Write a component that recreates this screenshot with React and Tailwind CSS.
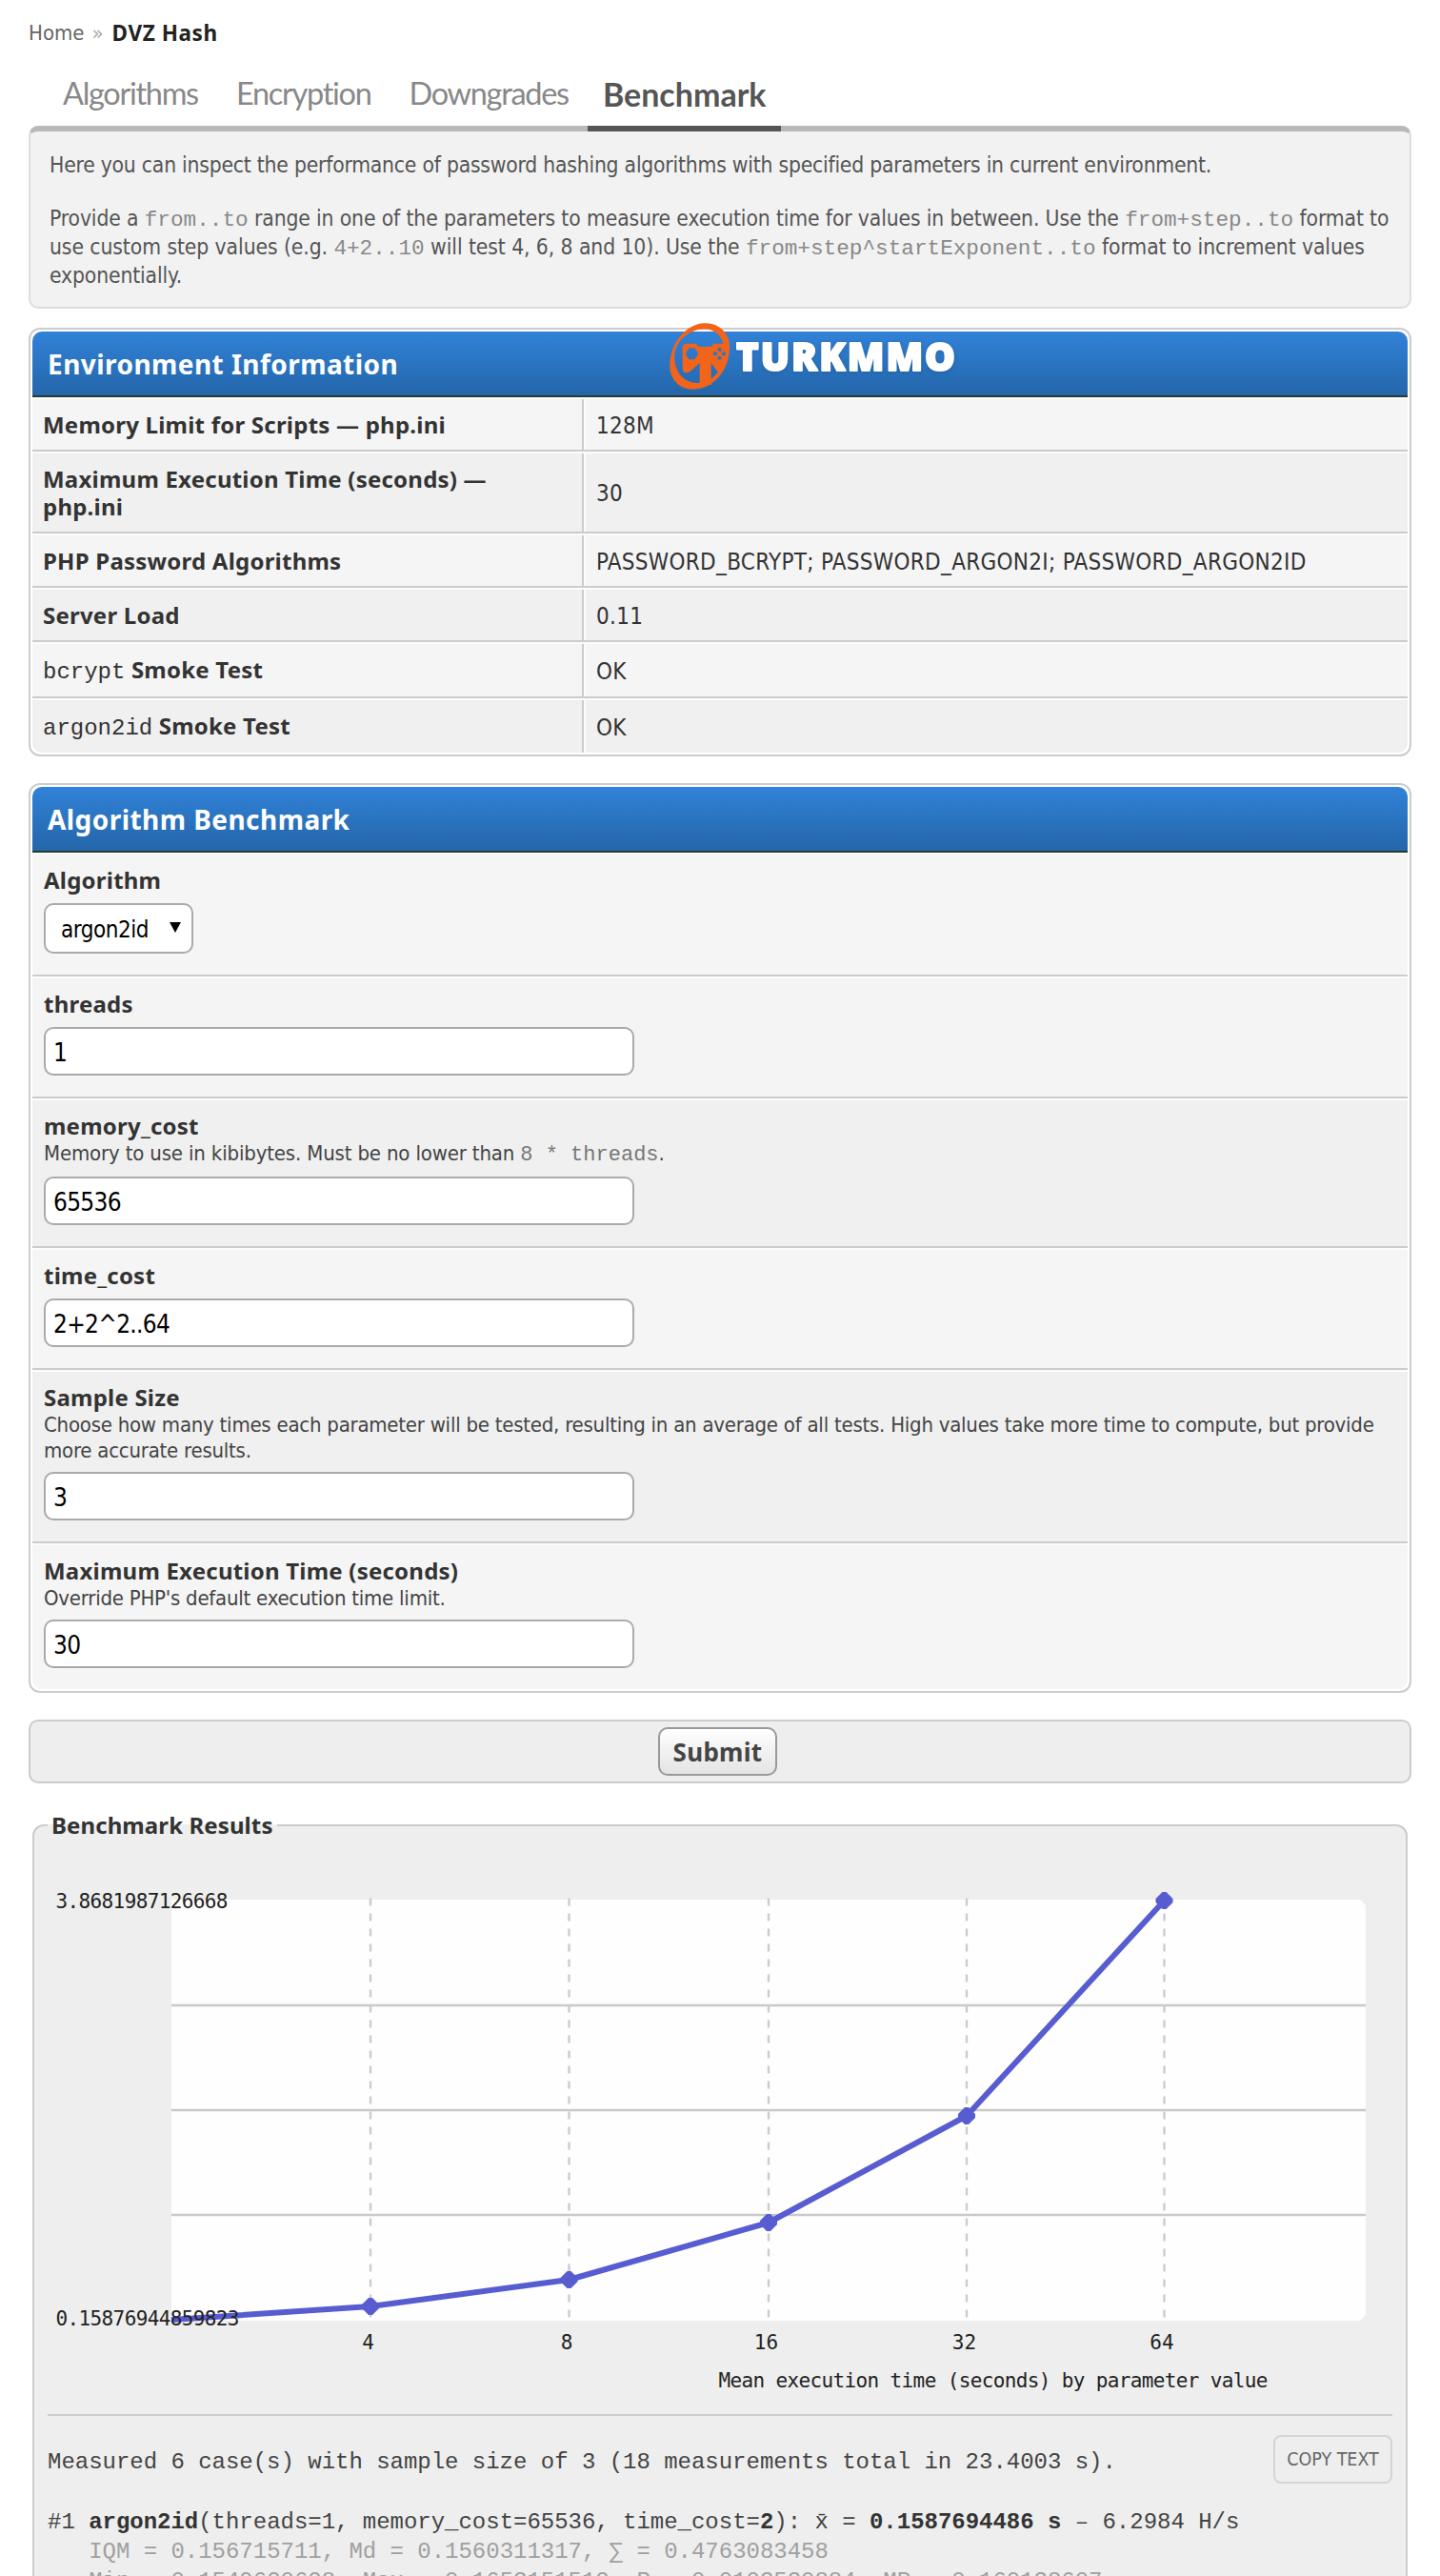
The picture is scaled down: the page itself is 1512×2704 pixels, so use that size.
import React from 'react';
import { clsx } from 'clsx';

const tabs = [
  { name: 'Algorithms' },
  { name: 'Encryption' },
  { name: 'Downgrades' },
  { name: 'Benchmark', active: true },
];

const environment = [
  { label: 'Memory Limit for Scripts — php.ini', value: '128M', height: 'h-[57px]' },
  { label: 'Maximum Execution Time (seconds) — php.ini', value: '30', height: 'h-[86px]' },
  { label: 'PHP Password Algorithms', value: 'PASSWORD_BCRYPT; PASSWORD_ARGON2I; PASSWORD_ARGON2ID', height: 'h-[57px]' },
  { label: 'Server Load', value: '0.11', height: 'h-[57px]' },
  { code: 'bcrypt', label: 'Smoke Test', value: 'OK', height: 'h-[59px]' },
  { code: 'argon2id', label: 'Smoke Test', value: 'OK', height: 'h-[57px]' },
];

const fields = [
  { label: 'threads', value: '1', height: 'h-[128px]', bg: 'bg-[#f4f4f4]', gap: 'mt-2.5' },
  {
    label: 'memory_cost',
    desc: <>Memory to use in kibibytes. Must be no lower than <Code className="text-[#777]">8 * threads</Code>.</>,
    value: '65536',
    height: 'h-[157px]',
    bg: 'bg-[#f0f0f0]',
    gap: 'mt-[11px]',
    descTracking: 'tracking-[-0.16px]',
  },
  { label: 'time_cost', value: '2+2^2..64', height: 'h-[128px]', bg: 'bg-[#f5f5f5]', gap: 'mt-2.5' },
  {
    label: 'Sample Size',
    desc: (
      <>
        Choose how many times each parameter will be tested, resulting in an average of all tests. High values take more time to compute, but provide
        <br />
        more accurate results.
      </>
    ),
    value: '3',
    height: 'h-[182px]',
    bg: 'bg-[#f0f0f0]',
    gap: 'mt-[9px]',
  },
  {
    label: 'Maximum Execution Time (seconds)',
    desc: "Override PHP's default execution time limit.",
    value: '30',
    height: 'h-[153px]',
    bg: 'bg-[#f5f5f5]',
    gap: 'mt-[9px]',
    last: true,
  },
];

const points = [
  { x: 130, y: 505 },
  { x: 339, y: 491, label: '4' },
  { x: 547.5, y: 463, label: '8' },
  { x: 757, y: 403, label: '16' },
  { x: 965, y: 291, label: '32' },
  { x: 1172.5, y: 65, label: '64' },
];

function Code({ className, children }) {
  return <code className={clsx("font-['Liberation_Mono',monospace] leading-none font-normal tracking-normal", className)}>{children}</code>;
}

function Label({ children }) {
  return <div className="font-['Noto_Sans',sans-serif] text-[24px] leading-[29px] font-bold tracking-[0.22px] text-[#333]">{children}</div>;
}

function Panel({ title, className, children }) {
  return (
    <section className={clsx('rounded-[12px] border-2 border-[#ccc] bg-white p-[2px]', className)}>
      <div className="overflow-hidden rounded-[10px]">
        <h2 className="flex h-[69px] items-center border-b-2 border-[#263c30] bg-linear-to-b from-[#3182d9] to-[#2466a9] pl-4 font-['Noto_Sans',sans-serif] text-[28px] font-bold tracking-[0.45px] text-white">
          {title}
        </h2>
        {children}
      </div>
    </section>
  );
}

function Logo() {
  return (
    <svg className="absolute top-[-10px] left-[666px]" width="320" height="82" viewBox="0 0 320 82">
      <g transform="scale(0.3333)" fill="#f26419" fillRule="evenodd">
        <path d="M130 16C180 14 214 50 210 100C206 170 155 224 95 224C50 224 20 190 22 145C25 75 75 18 130 16ZM112 36C65 46 34 86 37 130C40 170 66 206 112 204C165 202 195 150 193 98C190 52 160 27 112 36Z" />
        <path d="M75 80H105Q110 90 120 90H144Q156 90 160 80H198C204 115 196 150 180 178L152 141V210H116V141L86 168Q62 180 62 155V94Q62 80 75 80ZM83 94L73 107V117L83 130H99L110 117V107L99 94Z" />
      </g>
      <g fill="#2a76c6">
        <circle cx="55" cy="37.3" r="2.1" />
        <circle cx="64" cy="37.3" r="2.1" />
        <circle cx="59.6" cy="32.8" r="2.1" />
        <circle cx="59.6" cy="41.8" r="2.1" />
      </g>
      <text x="77" y="55" textLength="230" fill="#fff" stroke="#fff" strokeWidth="2" strokeLinejoin="round" className="font-['Noto_Sans',sans-serif] text-[40px] font-black drop-shadow-sm">
        TURKMMO
      </text>
    </svg>
  );
}

function Chart() {
  return (
    <svg className="block font-['DejaVu_Sans_Mono',monospace] text-[21px]" width="1412" height="604" viewBox="0 0 1412 604">
      <path d="M130 64H1378L1384 70V500L1378 506H130Z" fill="#fefefe" />
      {[175, 285, 395].map((y) => (
        <line key={y} x1="130" x2="1384" y1={y} y2={y} stroke="#c9c9c9" strokeWidth="2.4" />
      ))}
      {points.slice(1).map((p) => (
        <line key={p.x} x1={p.x} x2={p.x} y1="62.5" y2="505" stroke="#ccc" strokeWidth="2.4" strokeDasharray="8 8" />
      ))}
      <polyline points={points.map((p) => `${p.x},${p.y}`).join(' ')} fill="none" stroke="#575cd1" strokeWidth="6" strokeLinejoin="round" />
      {points.slice(1).map((p) => (
        <g key={p.x}>
          <path transform={`translate(${p.x} ${p.y})`} d="M-2 -9H2L9 -2V2L2 9H-2L-9 2V-2Z" fill="#575cd1" />
          <text x={p.x - 2.5} y="536" textAnchor="middle" fill="#222">{p.label}</text>
        </g>
      ))}
      <text x="8.5" y="72.5" textLength="181" fill="#222">3.8681987126668</text>
      <text x="8.5" y="511" textLength="193" fill="#222">0.15876944859823</text>
      <text x="704.5" y="575.5" textLength="577" fill="#222">Mean execution time (seconds) by parameter value</text>
    </svg>
  );
}

const App = () => {
  return (
    <div className="h-[2704px] overflow-hidden bg-white px-[30px] font-['DejaVu_Sans_Condensed','DejaVu_Sans',sans-serif] text-[24px] text-[#333]">
      {/* Breadcrumb */}
      <div className="flex h-[50px] gap-2 pt-5 text-[22px] leading-[30px]">
        <a className="text-[#666]">Home</a>
        <span className="text-[#aaa]">»</span>
        <b className="pl-px font-['Noto_Sans',sans-serif] text-[22.5px] leading-[29px] tracking-[0.6px] text-[#222]">DVZ Hash</b>
      </div>

      {/* Tabs sit on top of the intro box border */}
      <nav className="relative z-10 -mb-[6px] flex h-[88px] gap-2 pl-5 font-['Lato',sans-serif] leading-[40px]">
        {tabs.map((tab) => (
          <a
            key={tab.name}
            className={clsx(
              'px-4',
              tab.active
                ? '-ml-1 w-[203px] border-b-[6px] border-[#555] pt-[29px] text-[34px] font-bold text-[#555]'
                : 'pt-[28px] text-[32.5px] tracking-[-1.3px] text-[#888]'
            )}
          >
            {tab.name}
          </a>
        ))}
      </nav>

      <div className="h-[192px] rounded-[10px] border-2 border-t-[6px] border-[#ddd] border-t-[#b9b9b9] bg-[#f2f2f2] pt-5 pl-5 text-[22.7px] leading-[30px] tracking-[-0.22px] whitespace-nowrap text-[#555]">
        <p>Here you can inspect the performance of password hashing algorithms with specified parameters in current environment.</p>
        <p className="mt-[26px] tracking-[-0.13px]">
          Provide a <Code className="text-[#888]">from..to</Code> range in one of the parameters to measure execution time for values in between. Use the <Code className="text-[#888]">from+step..to</Code> format to
          <br />
          <span className="tracking-[-0.08px]">
            use custom step values (e.g. <Code className="text-[#888]">4+2..10</Code> will test 4, 6, 8 and 10). Use the <Code className="text-[#888]">from+step^startExponent..to</Code> format to increment values
          </span>
          <br />
          exponentially.
        </p>
      </div>

      <div className="relative mt-5">
        <Panel title="Environment Information">
          {environment.map((row, i) => {
            const last = i === environment.length - 1;
            return (
              <div
                key={i}
                className={clsx(
                  'grid grid-cols-[579px_1fr] border-t-2 border-t-[#fcfcfc]',
                  row.height,
                  !last && 'border-b-2 border-b-[#ccc]',
                  i % 2 ? 'bg-[#f0f0f0]' : 'bg-[#f5f5f5]'
                )}
              >
                <div className={clsx('flex items-center border-r-2 border-[#ccc] pr-10 pl-[11px]', row.code && 'pb-0.5')}>
                  <Label>
                    {row.code && <><Code>{row.code}</Code>{' '}</>}
                    {row.label}
                  </Label>
                </div>
                <div className="flex items-center border-l-2 border-[#fcfcfc] pt-0.5 pl-[11px] tracking-[0.3px]">{row.value}</div>
              </div>
            );
          })}
        </Panel>
        <Logo />
      </div>

      <Panel title="Algorithm Benchmark" className="mt-7">
        <div className="h-[130px] border-y-2 border-t-[#fcfcfc] border-b-[#ccc] bg-[#f5f5f5] pt-3 pl-3">
          <Label>Algorithm</Label>
          <div className="mt-2.5 flex h-[53px] w-[157px] items-center rounded-[10px] border-2 border-[#aaa] bg-white pt-0.5 pl-4 tracking-[-0.45px] text-black">
            argon2id
            <svg className="ml-auto mr-[11px] mb-1" width="12" height="11" viewBox="0 0 13 12">
              <path d="M0 0H13L6.5 12Z" />
            </svg>
          </div>
        </div>
        {fields.map((field) => (
          <div
            key={field.label}
            className={clsx('border-t-2 border-t-[#fcfcfc] pt-3 pl-3', field.height, field.bg, !field.last && 'border-b-2 border-b-[#ccc]')}
          >
            <Label>{field.label}</Label>
            {field.desc && (
              <div className={clsx('mt-px text-[22px] leading-[27px] whitespace-nowrap text-[#444]', field.descTracking || 'tracking-[-0.24px]')}>
                {field.desc}
              </div>
            )}
            <input
              type="text"
              defaultValue={field.value}
              className={clsx('block h-[51px] w-[620px] rounded-[10px] border-2 border-[#aaa] bg-white pt-0.5 pl-2 text-[26px] tracking-[-0.7px] text-black', field.gap)}
            />
          </div>
        ))}
      </Panel>

      <div className="mt-7 flex h-[67px] items-center justify-center rounded-[10px] border-2 border-[#ccc] bg-[#eee] pr-[5px]">
        <button className="h-[51px] w-[125px] rounded-[10px] border-2 border-[#999] bg-linear-to-b from-white to-[#e4e4e4] font-['Noto_Sans',sans-serif] text-[26px] leading-none font-bold tracking-[0.3px] text-[#444]">
          Submit
        </button>
      </div>

      {/* Results */}
      <fieldset className="mx-1 mt-[29px] h-[1000px] min-w-0 rounded-[12px] border-2 border-[#ccc] bg-[#eee] px-[14px]">
        <legend className="h-[29px] px-1 font-['Noto_Sans',sans-serif] leading-[29px] font-bold tracking-[0.1px]">Benchmark Results</legend>
        <Chart />
        <div className="border-t-2 border-[#ccc] pt-5 font-['Liberation_Mono',monospace] leading-[31px] tracking-[-0.02px] whitespace-pre text-[#444]">
          <div className="flex justify-between">
            <p className="pt-[13px]">Measured 6 case(s) with sample size of 3 (18 measurements total in 23.4003 s).</p>
            <button className="h-[51px] w-[125px] rounded-[8px] border-2 border-[#d4d4d4] pt-px font-['DejaVu_Sans_Condensed',sans-serif] text-[19.5px] leading-none text-[#666]">
              COPY TEXT
            </button>
          </div>
          <p className="mt-[25px]">
            #1 <b className="text-[#333]">argon2id</b>(threads=1, memory_cost=65536, time_cost=<b className="text-[#333]">2</b>): x̄ = <b className="text-[#333]">0.1587694486 s</b> – 6.2984 H/s
          </p>
          <div className="text-[#a0a0a0]">
            <p>{'   '}IQM = 0.156715711, Md = 0.1560311317, ∑ = 0.4763083458</p>
            <p>{'   '}Min = 0.1549620628, Max = 0.1653151512, R = 0.0103530884, MR = 0.160138607</p>
          </div>
        </div>
      </fieldset>
    </div>
  );
};

export default App;
